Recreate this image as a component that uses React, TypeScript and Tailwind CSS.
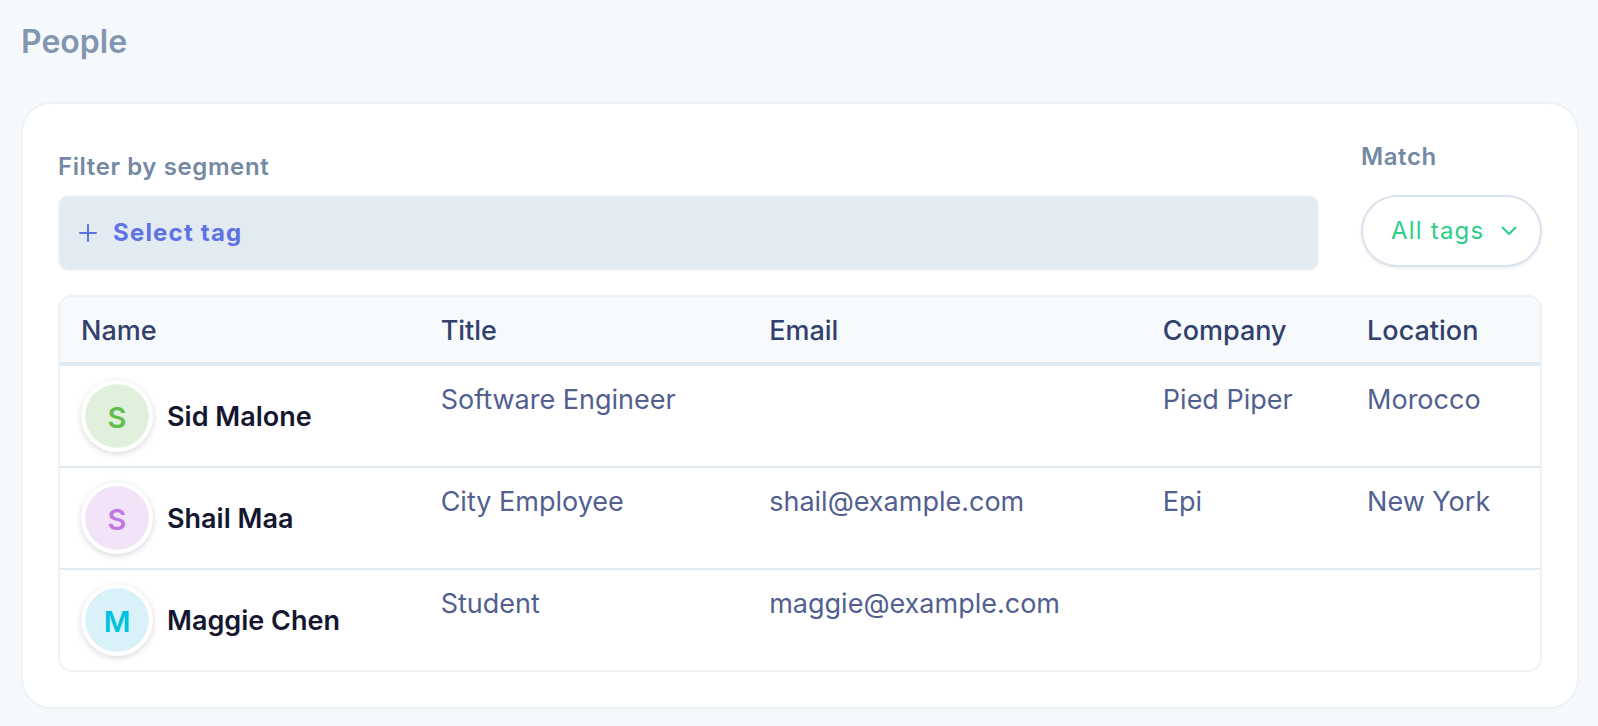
const FONT = "font-[Inter,'Liberation_Sans',sans-serif]";

type Person = {
  name: string;
  title: string;
  email: string;
  company: string;
  location: string;
  avatar: string;
};

const people: Person[] = [
  {
    name: "Sid Malone",
    title: "Software Engineer",
    email: "",
    company: "Pied Piper",
    location: "Morocco",
    avatar: "bg-[#e1f0dd] text-[#61bd4f]",
  },
  {
    name: "Shail Maa",
    title: "City Employee",
    email: "shail@example.com",
    company: "Epi",
    location: "New York",
    avatar: "bg-[#f2e3f9] text-[#c377e0]",
  },
  {
    name: "Maggie Chen",
    title: "Student",
    email: "maggie@example.com",
    company: "",
    location: "",
    avatar: "bg-[#d9f2fa] text-[#00c2e0]",
  },
];

const columns = [
  { label: "Name", width: "w-[24.3%]" },
  { label: "Title", width: "w-[22.2%]" },
  { label: "Email", width: "w-[26.6%]" },
  { label: "Company", width: "w-[13.8%]" },
  { label: "Location", width: "w-[13.1%]" },
];

const textCell = "px-[21px] pt-[15px] pb-[13px]";

function PersonRow({ person }: { person: Person }) {
  return (
    <tr className="border-b-2 border-[#e2eaf1] align-top last:border-b-0">
      <td className="px-[21px] py-[14px]">
        <div className="flex items-center gap-[14px]">
          <span
            aria-hidden="true"
            className={`flex size-[72px] shrink-0 items-center justify-center rounded-full border-4 border-white bg-clip-padding pt-[2px] text-[29px] font-semibold shadow-[0_2px_6px_rgba(20,20,45,0.16)] ${person.avatar}`}
          >
            {person.name[0]}
          </span>
          <span className="font-semibold whitespace-nowrap text-[#14172f]">{person.name}</span>
        </div>
      </td>
      <td className={textCell}>{person.title}</td>
      <td className={textCell}>{person.email}</td>
      <td className={textCell}>{person.company}</td>
      <td className={textCell}>{person.location}</td>
    </tr>
  );
}

export default function App() {
  return (
    <main className={`min-h-screen bg-[#f5f9fc] pt-[21px] pr-[19px] pb-4 pl-[21px] ${FONT}`}>
      <h1 className="text-[32px] leading-[42px] font-semibold text-[#8296b0]">People</h1>

      <section className="mt-[39px] rounded-[30px] border-2 border-[#edf2f7] bg-white px-[35px] pt-[37px] pb-[35px]">
        <div className="flex items-end gap-[42px]">
          <div className="flex-1">
            <h2 id="segment-label" className="text-2xl leading-8 font-semibold tracking-wide text-[#7489a3]">
              Filter by segment
            </h2>
            <div
              role="group"
              aria-labelledby="segment-label"
              className="mt-3 flex h-[76px] items-center rounded-[10px] border-2 border-[#edf2f7] bg-[#e2eaf2] px-[19px]"
            >
              <button type="button" className="flex items-center gap-4 text-2xl font-bold tracking-wider text-[#5e72e4]">
                <svg viewBox="0 0 18 18" className="size-[18px]" fill="none" stroke="currentColor" strokeWidth="2" strokeLinecap="round" aria-hidden="true">
                  <path d="M9 1v16M1 9h16" />
                </svg>
                Select tag
              </button>
            </div>
          </div>

          <div className="pb-1">
            <label htmlFor="match" className="block text-2xl leading-8 font-semibold tracking-wide text-[#7489a3]">
              Match
            </label>
            <div className="mt-[22px] grid w-[181px] items-center">
              <select
                id="match"
                className="col-start-1 row-start-1 h-[72px] w-full appearance-none rounded-full border-2 border-[#dae2ee] bg-white pl-7 text-2xl tracking-wider text-[#2dce89] shadow-[0_2px_3px_rgba(20,20,45,0.06)]"
              >
                <option>All tags</option>
                <option>Any tag</option>
              </select>
              <svg viewBox="0 0 16 10" className="pointer-events-none col-start-1 row-start-1 mr-[25px] h-[10px] w-4 justify-self-end text-[#2dce89]" fill="none" stroke="currentColor" strokeWidth="2" strokeLinecap="round" strokeLinejoin="round" aria-hidden="true">
                <path d="M1.5 1.5 8 8l6.5-6.5" />
              </svg>
            </div>
          </div>
        </div>

        <div className="mt-6 overflow-hidden rounded-[14px] border-2 border-[#edf2f7]">
          <table className="w-full table-fixed border-collapse text-left text-[27px] leading-[37px] text-[#525f8f]">
            <thead className="bg-[#f6fafd] text-[#32406b]">
              <tr className="border-b-4 border-[#e2eaf1]">
                {columns.map((column) => (
                  <th key={column.label} scope="col" className={`${textCell} font-medium ${column.width}`}>
                    {column.label}
                  </th>
                ))}
              </tr>
            </thead>
            <tbody>
              {people.map((person) => (
                <PersonRow key={person.name} person={person} />
              ))}
            </tbody>
          </table>
        </div>
      </section>
    </main>
  );
}
